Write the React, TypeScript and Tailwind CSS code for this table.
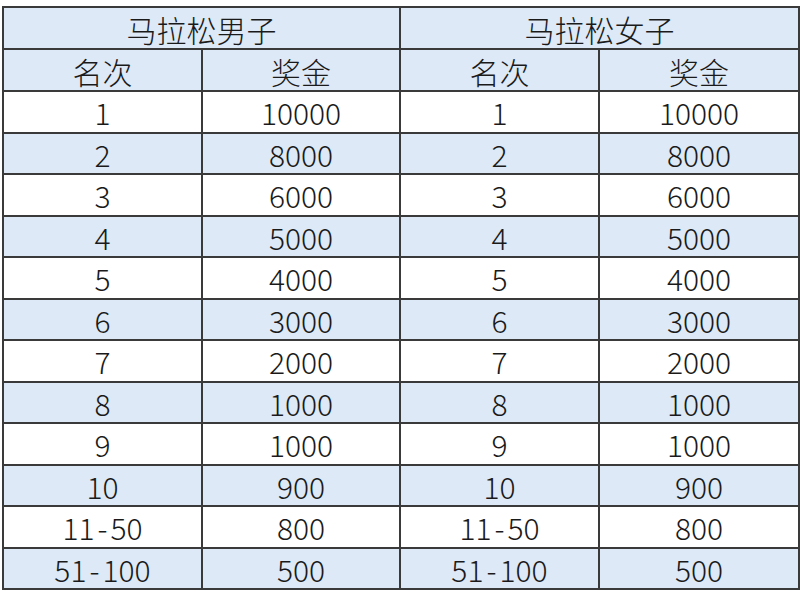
import React from "react";

const rows: [string, string][] = [
  ["1", "10000"],
  ["2", "8000"],
  ["3", "6000"],
  ["4", "5000"],
  ["5", "4000"],
  ["6", "3000"],
  ["7", "2000"],
  ["8", "1000"],
  ["9", "1000"],
  ["10", "900"],
  ["11-50", "800"],
  ["51-100", "500"],
];

function Rank({ text }: { text: string }) {
  const parts = text.split("-");
  if (parts.length === 1) return <>{text}</>;
  return (
    <>
      {parts[0]}
      <span className="mx-[3px]">-</span>
      {parts[1]}
    </>
  );
}

export default function App() {
  const cell = "border-2 border-[#3a3a3a] text-center align-middle p-0 pt-[1px] leading-none";
  return (
    <div
      className="w-[800px] h-[595px] bg-white pt-[6px] pl-[2px] text-[#1a1a1a] text-[30px] font-light"
      style={{ fontFamily: '"Noto Sans CJK SC", "Noto Sans", sans-serif' }}
    >
      <table className="border-collapse w-[796px] table-fixed">
        <colgroup>
          <col className="w-[199px]" />
          <col className="w-[198px]" />
          <col className="w-[199px]" />
          <col className="w-[200px]" />
        </colgroup>
        <tbody>
          <tr className="h-[42px] bg-[#dde9f6]">
            <td colSpan={2} className={cell}>马拉松男子</td>
            <td colSpan={2} className={cell}>马拉松女子</td>
          </tr>
          <tr className="h-[42px] bg-[#dde9f6]">
            <td className={cell}>名次</td>
            <td className={cell}>奖金</td>
            <td className={cell}>名次</td>
            <td className={cell}>奖金</td>
          </tr>
          {rows.map(([r, p], i) => (
            <tr key={i} className={`h-[41.5px] ${i % 2 === 1 ? "bg-[#dde9f6]" : "bg-white"}`}>
              <td className={cell}><Rank text={r} /></td>
              <td className={cell}>{p}</td>
              <td className={cell}><Rank text={r} /></td>
              <td className={cell}>{p}</td>
            </tr>
          ))}
        </tbody>
      </table>
    </div>
  );
}
